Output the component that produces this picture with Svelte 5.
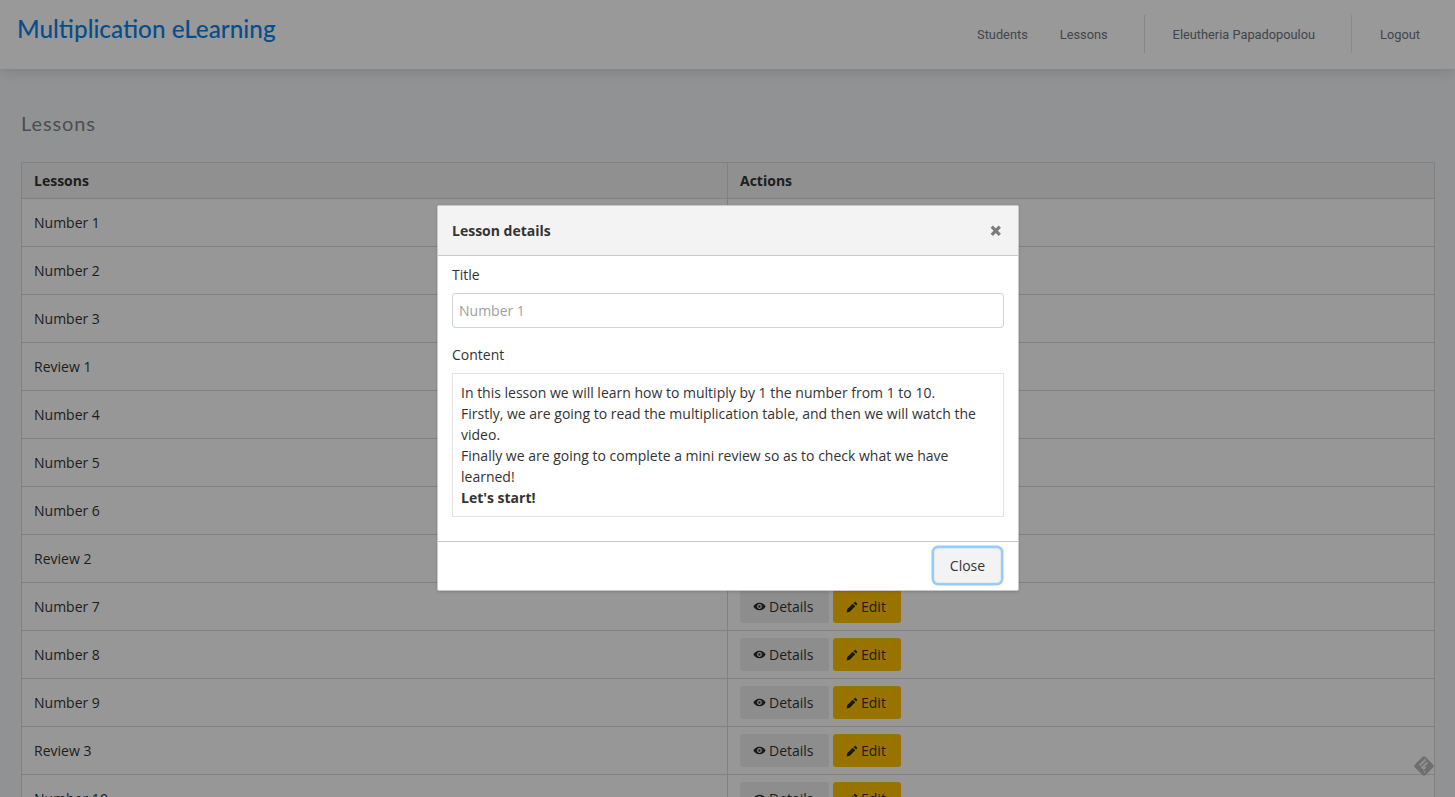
<script>
  const rows = ['Number 1','Number 2','Number 3','Review 1','Number 4','Number 5','Number 6','Review 2','Number 7','Number 8','Number 9','Review 3','Number 10'];
</script>

<div class="page">
  <header class="navbar">
    <a class="brand" href="#top">Multiplication eLearning</a>
    <nav class="nav">
      <a class="students" href="#s">Students</a>
      <a class="lessons" href="#l">Lessons</a>
      <span class="user">Eleutheria Papadopoulou</span>
      <a class="logout" href="#o">Logout</a>
    </nav>
  </header>
  <main class="main">
    <h1 class="title">Lessons</h1>
    <table class="table">
      <thead>
        <tr><th class="c1">Lessons</th><th>Actions</th></tr>
      </thead>
      <tbody>
        {#each rows as r}
          <tr>
            <td>{r}</td>
            <td>
              <div class="actions">
                <button class="btn light">
                  <svg class="ico eye" viewBox="0 0 24 16" aria-hidden="true"><path fill-rule="evenodd" d="M12 1C7 1 3 4 .6 8 3 12 7 15 12 15s9-3 11.4-7C21 4 17 1 12 1zm0 2.6a4.4 4.4 0 1 1 0 8.8 4.4 4.4 0 0 1 0-8.8zM12 5.8a2.2 2.2 0 1 0 0 4.4 2.2 2.2 0 0 0 0-4.4z"/></svg>
                  Details
                </button>
                <button class="btn warn">
                  <svg class="ico pen" viewBox="0 0 16 16" aria-hidden="true"><path d="M11.4 1.2a1 1 0 0 1 1.4 0l2 2a1 1 0 0 1 0 1.4l-1.4 1.4-3.4-3.4zM9 3.6 12.4 7l-7.2 7.2L.6 15.4l1.2-4.6z"/></svg>
                  Edit
                </button>
              </div>
            </td>
          </tr>
        {/each}
      </tbody>
    </table>
  </main>
  <svg class="feedly" viewBox="0 0 24 24" aria-hidden="true">
    <rect x="4.5" y="4.5" width="15" height="15" rx="2.5" transform="rotate(45 12 12)" fill="#b8b8b8"/>
    <path d="M13.5 5.5 7.5 11.5M15.5 8.5l-6 5.5M13.5 13 11 15.5M13 17.5l-.8.8" stroke="#f2f2f2" stroke-width="1.8" fill="none"/>
  </svg>
  <div class="backdrop"></div>
  <div class="modal">
    <div class="m-head">
      <h2>Lesson details</h2>
      <svg class="x" viewBox="0 0 10 10" aria-hidden="true"><path d="M1.5 1.5l7 7M8.5 1.5l-7 7" stroke="#7c7c7c" stroke-width="2.8"/></svg>
    </div>
    <div class="m-body">
      <label class="lbl" for="t">Title</label>
      <input id="t" class="input" placeholder="Number 1" />
      <div class="lbl second">Content</div>
      <div class="content">
        In this lesson we will learn how to multiply by 1 the number from 1 to 10.<br />
        Firstly, we are going to read the multiplication table, and then we will watch the video.<br />
        Finally we are going to complete a mini review so as to check what we have learned!<br />
        <strong>Let's start!</strong>
      </div>
    </div>
    <div class="m-foot">
      <button class="close">Close</button>
    </div>
  </div>
</div>

<style>
  :global(body) { margin: 0; overflow: hidden; }
  .page {
    position: relative;
    height: 797px;
    overflow: hidden;
    background: #f1f4f7;
    font: 14px/21px "Open Sans", sans-serif;
    color: #333;
  }
  .navbar {
    height: 69px;
    background: #fff;
    box-shadow: 0 2px 14px rgba(0,0,0,.14);
    display: flex;
    justify-content: space-between;
    position: relative;
  }
  .brand {
    margin: 12px 0 0 17px;
    font: 500 24.3px/34px "Lato", sans-serif;
    color: #0a82e8;
    text-decoration: none;
    height: 34px;
  }
  .nav {
    display: flex;
    align-items: flex-start;
    margin: 15px 35px 0 0;
    font: 12.8px/39px Roboto, sans-serif;
    color: #6e7480;
  }
  .nav a { color: inherit; text-decoration: none; }
  .students { margin-right: 32px; }
  .lessons { margin-right: 36px; }
  .user { border-left: 1px solid #dcdfe6; border-right: 1px solid #e4e6ea; padding: 0 36px 0 28px; margin-right: 28px; height: 38px; }
  .main { padding: 0 20px 0 21px; }
  .title {
    margin: 43px 0 28px;
    font: 400 20px/22px "Lato", sans-serif;
    color: #7e8288;
    letter-spacing: .9px;
  }
  .table {
    width: 1414px;
    border-collapse: collapse;
    table-layout: fixed;
    background: #fff;
    border: 1px solid #cfcfcf;
  }
  th, td {
    border: 1px solid #d8d8d8;
    padding: 0 12px;
    text-align: left;
  }
  th { height: 35px; font-weight: 700; background: #f0f0f0; }
  .c1 { width: 681px; }
  td { height: 47px; background: #fcfcfc; }
  .actions { display: flex; gap: 4px; }
  .btn {
    height: 33px;
    border: 0;
    border-radius: 3px;
    font: 14px "Open Sans", sans-serif;
    color: #333;
    display: flex;
    align-items: center;
    gap: 3px;
    padding: 0 13px;
  }
  .light { background: #ececec; width: 89px; }
  .warn { background: #ffc000; width: 68px; }
  .ico { fill: #2b2b2b; display: block; }
  .eye { width: 13px; height: 9px; }
  .pen { width: 12px; height: 12px; }
  .feedly { position: absolute; left: 1412px; top: 754px; width: 24px; height: 24px; }
  .backdrop { position: absolute; inset: 0; background: rgba(0,0,0,.4); }
  .modal {
    position: absolute;
    left: 437px;
    top: 205px;
    width: 580px;
    background: #fff;
    border: 1px solid #c9c9c9;
    border-radius: 2px;
    box-shadow: 0 1px 3px rgba(0,0,0,.15);
  }
  .m-head {
    height: 49px;
    background: #f3f3f3;
    border-bottom: 1px solid #c8c8c8;
    padding: 0 17px 0 14px;
    display: flex;
    align-items: center;
    justify-content: space-between;
  }
  .m-head h2 { margin: 0; font: 700 14px/21px "Open Sans", sans-serif; color: #333; }
  .x { width: 11.5px; height: 11.5px; margin-top: 1px; }
  .m-body { padding: 8px 14px 24px; border-bottom: 1px solid #c8c8c8; }
  .lbl { display: block; margin-bottom: 8px; line-height: 21px; }
  .second { margin-top: 16px; margin-bottom: 8px; }
  .input {
    display: block;
    box-sizing: border-box;
    width: 552px;
    height: 35px;
    padding: 0 6px;
    border: 1px solid #ced4da;
    border-radius: 3px;
    font: 14px "Open Sans", sans-serif;
    color: #495057;
    background: #fff;
  }
  .input::placeholder { color: #a0a0a0; opacity: 1; }
  .content {
    box-sizing: border-box;
    width: 552px;
    height: 144px;
    border: 1px solid #e3e3e3;
    padding: 8px 8px;
  }
  .m-foot { height: 48px; display: flex; justify-content: flex-end; align-items: center; padding-right: 17px; }
  .close {
    box-sizing: border-box;
    width: 67px;
    height: 35px;
    border: 1px solid #e8e8e8;
    border-radius: 4px;
    background: #f3f3f3;
    box-shadow: 0 0 0 2.5px #93ccff;
    font: 14px "Open Sans", sans-serif;
    color: #333;
    padding: 0;
    margin-top: -1px;
  }
</style>
